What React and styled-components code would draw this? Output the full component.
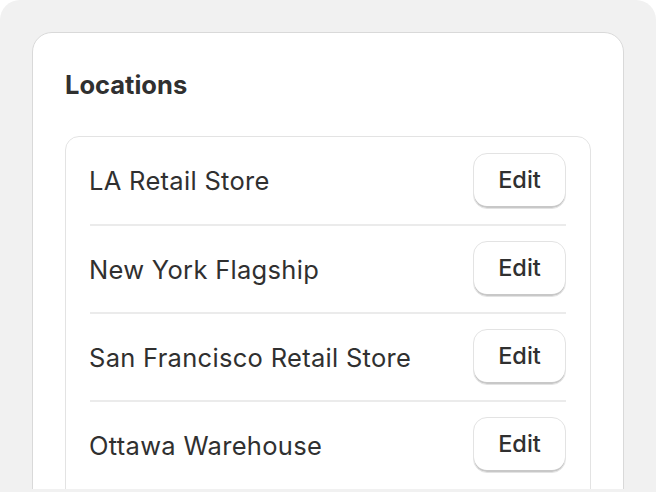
import React from 'react';
import styled, { createGlobalStyle } from 'styled-components';

const GlobalStyle = createGlobalStyle`
  html, body {
    margin: 0;
    padding: 0;
    background: #fff;
    font-family: Inter, "Noto Sans", sans-serif;
    color: #303030;
  }
  * { box-sizing: border-box; }
`;

const Backdrop = styled.div`
  width: 656px;
  height: 492px;
  background: #f1f1f1;
  border-radius: 20px 20px 0 0;
  padding: 32px 32px 0;
  overflow: hidden;
`;

const Clip = styled.div`
  height: 457px;
  overflow: hidden;
`;

const Card = styled.div`
  background: #fff;
  border: 1px solid #d9d9d9;
  border-radius: 20px;
  padding: 32px;
  min-height: 540px;
`;

const Title = styled.h2`
  margin: 0 0 31px;
  font-size: 25.5px;
  line-height: 40px;
  font-weight: 650;
  letter-spacing: 0;
`;

const List = styled.div`
  border: 1px solid #e3e3e3;
  border-radius: 14px;
  padding: 0 24px;
  min-height: 420px;
`;

const Row = styled.div`
  display: flex;
  align-items: center;
  justify-content: space-between;
  height: ${p => (p.first ? '87px' : '88px')};
  border-top: ${p => (p.first ? 'none' : '2px solid #ebebeb')};
`;

const Name = styled.span`
  font-size: 25.5px;
  font-weight: 400;
  letter-spacing: 0.3px;
  margin-left: -1px;
`;

const EditButton = styled.button`
  width: 93px;
  height: 56px;
  border: 1px solid #e3e3e3;
  border-radius: 14px;
  background: #fff;
  box-shadow: inset 0 -2px 0 #c8c8c8;
  font-family: inherit;
  font-size: 23.5px;
  font-weight: 550;
  color: #303030;
  padding: 0 0 3px;
  cursor: pointer;
`;

const locations = [
  'LA Retail Store',
  'New York Flagship',
  'San Francisco Retail Store',
  'Ottawa Warehouse',
];

export default function App() {
  return (
    <>
      <GlobalStyle />
      <Backdrop>
        <Clip>
          <Card>
            <Title>Locations</Title>
            <List>
              {locations.map((name, i) => (
                <Row key={name} first={i === 0}>
                  <Name>{name}</Name>
                  <EditButton>Edit</EditButton>
                </Row>
              ))}
            </List>
          </Card>
        </Clip>
      </Backdrop>
    </>
  );
}
